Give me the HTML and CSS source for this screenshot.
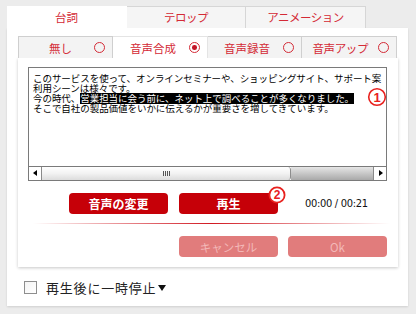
FILE: index.html
```html
<!DOCTYPE html>
<html lang="ja">
<head>
    <meta charset="UTF-8">
    <title>台詞</title>
    <link rel="stylesheet" href="styles.css">
</head>
<body>
    <div class="wrap">
        <div class="tabs">
            <div class="tab active">台詞</div>
            <div class="tab">テロップ</div>
            <div class="tab wide">アニメーション</div>
        </div>
        <div class="panel">
            <div class="subtabs">
                <div class="subtab"><span class="label">無し</span><span class="radio"></span></div>
                <div class="subtab active"><span class="label">音声合成</span><span class="radio on"></span></div>
                <div class="subtab"><span class="label">音声録音</span><span class="radio"></span></div>
                <div class="subtab"><span class="label">音声アップ</span><span class="radio"></span></div>
            </div>
            <div class="card">
                <div class="editor">
                    <div class="text">
                        <div class="line">このサービスを使って、オンラインセミナーや、ショッピングサイト、サポート案</div>
                        <div class="line">利用シーンは様々です。</div>
                        <div class="line">今の時代、<span class="sel">営業担当に会う前に、ネット上で調べることが多くなりました。</span></div>
                        <div class="line">そこで自社の製品価値をいかに伝えるかが重要さを増してきています。</div>
                    </div>
                    <div class="hscroll">
                        <div class="arrow left"></div>
                        <div class="thumb"><span class="grip"></span></div>
                        <div class="track"></div>
                        <div class="arrow right"></div>
                    </div>
                    <svg class="mark mark-1" width="20" height="20" viewBox="0 0 20 20">
                        <circle cx="10" cy="10" r="8.3" fill="#fff" stroke="#e8211e" stroke-width="1.6"/>
                        <text x="10" y="14.6" text-anchor="middle" font-size="13" font-weight="bold" fill="#e8211e" font-family="Liberation Sans, sans-serif">1</text>
                    </svg>
                </div>
                <div class="actions">
                    <button class="btn red">音声の変更</button>
                    <div class="play-wrap">
                        <button class="btn red">再生</button>
                        <svg class="mark mark-2" width="20" height="18" viewBox="0 0 20 18">
                            <circle cx="10" cy="9" r="7.6" fill="#fff" stroke="#e8211e" stroke-width="1.8"/>
                            <text x="10" y="13.4" text-anchor="middle" font-size="12" font-weight="bold" fill="#e8211e" font-family="Liberation Sans, sans-serif">2</text>
                        </svg>
                    </div>
                    <span class="time">00:00 / 00:21</span>
                </div>
                <div class="divider"></div>
                <div class="actions end">
                    <button class="btn pale">キャンセル</button>
                    <button class="btn pale">Ok</button>
                </div>
            </div>
            <div class="pause">
                <span class="check"></span>
                <span class="pause-label">再生後に一時停止</span>
                <span class="caret"></span>
            </div>
        </div>
    </div>
</body>
</html>
```

FILE: styles.css
```css
body {
    margin: 0;
    background: #ececec;
    font-family: "Noto Sans CJK JP", "Noto Sans", sans-serif;
    width: 416px;
    height: 314px;
    overflow: hidden;
}
.wrap {
    padding: 6px 0 0 7px;
    width: 401px;
}
.tabs {
    display: flex;
    height: 22px;
}
.tab {
    width: 119px;
    height: 22px;
    box-sizing: border-box;
    border: 1px solid #d6d6d6;
    border-bottom: none;
    border-left: none;
    background: #f5f5f5;
    color: #d42a36;
    font-size: 11.5px;
    line-height: 21px;
    text-align: center;
    letter-spacing: -0.5px;
}
.tab.active {
    width: 120px;
    background: #fff;
    border-color: #fff;
    letter-spacing: 0;
}
.tab.wide {
    width: 120px;
}
.panel {
    background: #fff;
    height: 278px;
    box-sizing: border-box;
    padding: 8px 10px 0 11px;
    box-shadow: 0 1px 2px rgba(0, 0, 0, 0.12);
}
.subtabs {
    display: flex;
    height: 22px;
}
.subtab {
    width: 95px;
    height: 22px;
    box-sizing: border-box;
    border: 1px solid #cfcfcf;
    border-bottom: none;
    border-left: none;
    background: #f3f3f3;
    display: flex;
    align-items: center;
    justify-content: flex-end;
    padding-right: 7px;
    color: #d42a36;
    font-size: 11.5px;
}
.subtab:first-child {
    border-left: 1px solid #cfcfcf;
}
.subtab:nth-child(3) {
    width: 94px;
}
.subtab.active {
    background: #fff;
    border-color: #e4e4e4;
}
.subtab .label {
    margin-right: 13px;
}
.subtab:first-child .label {
    margin-right: 22px;
}
.subtab:last-child .label {
    margin-right: 10px;
    letter-spacing: -0.4px;
}
.radio {
    width: 9px;
    height: 9px;
    border: 1.3px solid #d42a36;
    border-radius: 50%;
    position: relative;
    flex: none;
}
.radio.on::after {
    content: "";
    position: absolute;
    left: 2.2px;
    top: 2.2px;
    width: 4.6px;
    height: 4.6px;
    border-radius: 50%;
    background: #c41628;
}
.card {
    width: 380px;
    height: 209px;
    box-sizing: border-box;
    background: #fff;
    box-shadow: 0 1px 3px rgba(0, 0, 0, 0.22);
    padding: 9px 0 0 10px;
}
.editor {
    position: relative;
    width: 359px;
    height: 114px;
    box-sizing: border-box;
    border: 1px solid #7a7a7a;
    display: flex;
    flex-direction: column;
}
.text {
    flex: 1;
    padding: 5px 0 0 4px;
    font-size: 9.5px;
    color: #000;
    white-space: nowrap;
    letter-spacing: -0.05px;
}
.line {
    line-height: 10px;
}
.sel {
    background: linear-gradient(#000, #000) 0 50% / 100% 11px no-repeat;
    color: #fff;
}
.hscroll {
    height: 13px;
    display: flex;
    border-top: 1px solid #7a7a7a;
}
.arrow {
    width: 12px;
    background: #fff;
    position: relative;
    border-right: 1px solid #8a8a8a;
}
.arrow.right {
    border-right: none;
    border-left: 1px solid #8a8a8a;
}
.arrow::after {
    content: "";
    position: absolute;
    top: 3px;
    border-top: 3.5px solid transparent;
    border-bottom: 3.5px solid transparent;
}
.arrow.left::after {
    left: 4px;
    border-right: 4px solid #000;
}
.arrow.right::after {
    left: 5px;
    border-left: 4px solid #000;
}
.thumb {
    width: 248px;
    background: linear-gradient(#fff, #f2f2f2 50%, #dcdcdc);
    border-right: 1px solid #8d8d8d;
    border-radius: 0 3px 3px 0;
    display: flex;
    align-items: center;
    justify-content: center;
}
.grip {
    width: 7px;
    height: 5px;
    background: repeating-linear-gradient(90deg, #555 0 1px, transparent 1px 2px);
}
.track {
    flex: 1;
    background: linear-gradient(#e6e6e6, #a9a9a9);
}
.mark {
    position: absolute;
    display: block;
}
.mark-1 {
    right: -1px;
    top: 19px;
}
.actions {
    display: flex;
    align-items: center;
    height: 21px;
    margin-top: 12px;
    padding-left: 41px;
}
.btn {
    width: 99px;
    height: 21px;
    border: none;
    border-radius: 4px;
    font-family: "Noto Sans CJK JP", sans-serif;
    font-size: 12px;
    font-weight: bold;
    padding: 0;
}
.btn.red {
    background: #c60008;
    color: #fff;
    margin-right: 11px;
}
.play-wrap {
    position: relative;
    display: flex;
}
.mark-2 {
    right: 2px;
    top: -7px;
}
.time {
    margin-left: 16px;
    font-family: "DejaVu Sans Condensed", "DejaVu Sans", sans-serif;
    font-size: 11px;
    letter-spacing: -0.3px;
    color: #111;
}
.divider {
    margin: 9px 8px 0 5px;
    height: 1px;
    background: linear-gradient(90deg, rgba(204, 0, 10, 0), rgba(204, 0, 10, 0.9) 50%, rgba(204, 0, 10, 0));
}
.actions.end {
    margin-top: 12px;
    padding-left: 151px;
}
.btn.pale {
    background: #e17c7c;
    color: #f3b8b8;
    font-weight: normal;
    font-size: 11.5px;
    margin-right: 10px;
}
.pause {
    display: flex;
    align-items: center;
    margin: 14px 0 0 6px;
    height: 13px;
}
.check {
    width: 11px;
    height: 11px;
    border: 1px solid #8e8e8e;
    background: linear-gradient(135deg, #f4f4f4, #fff);
    margin-right: 9px;
}
.pause-label {
    font-size: 13px;
    letter-spacing: 0.8px;
    color: #222;
}
.caret {
    margin-left: 2px;
    border-left: 4.5px solid transparent;
    border-right: 4.5px solid transparent;
    border-top: 6px solid #111;
}
```
